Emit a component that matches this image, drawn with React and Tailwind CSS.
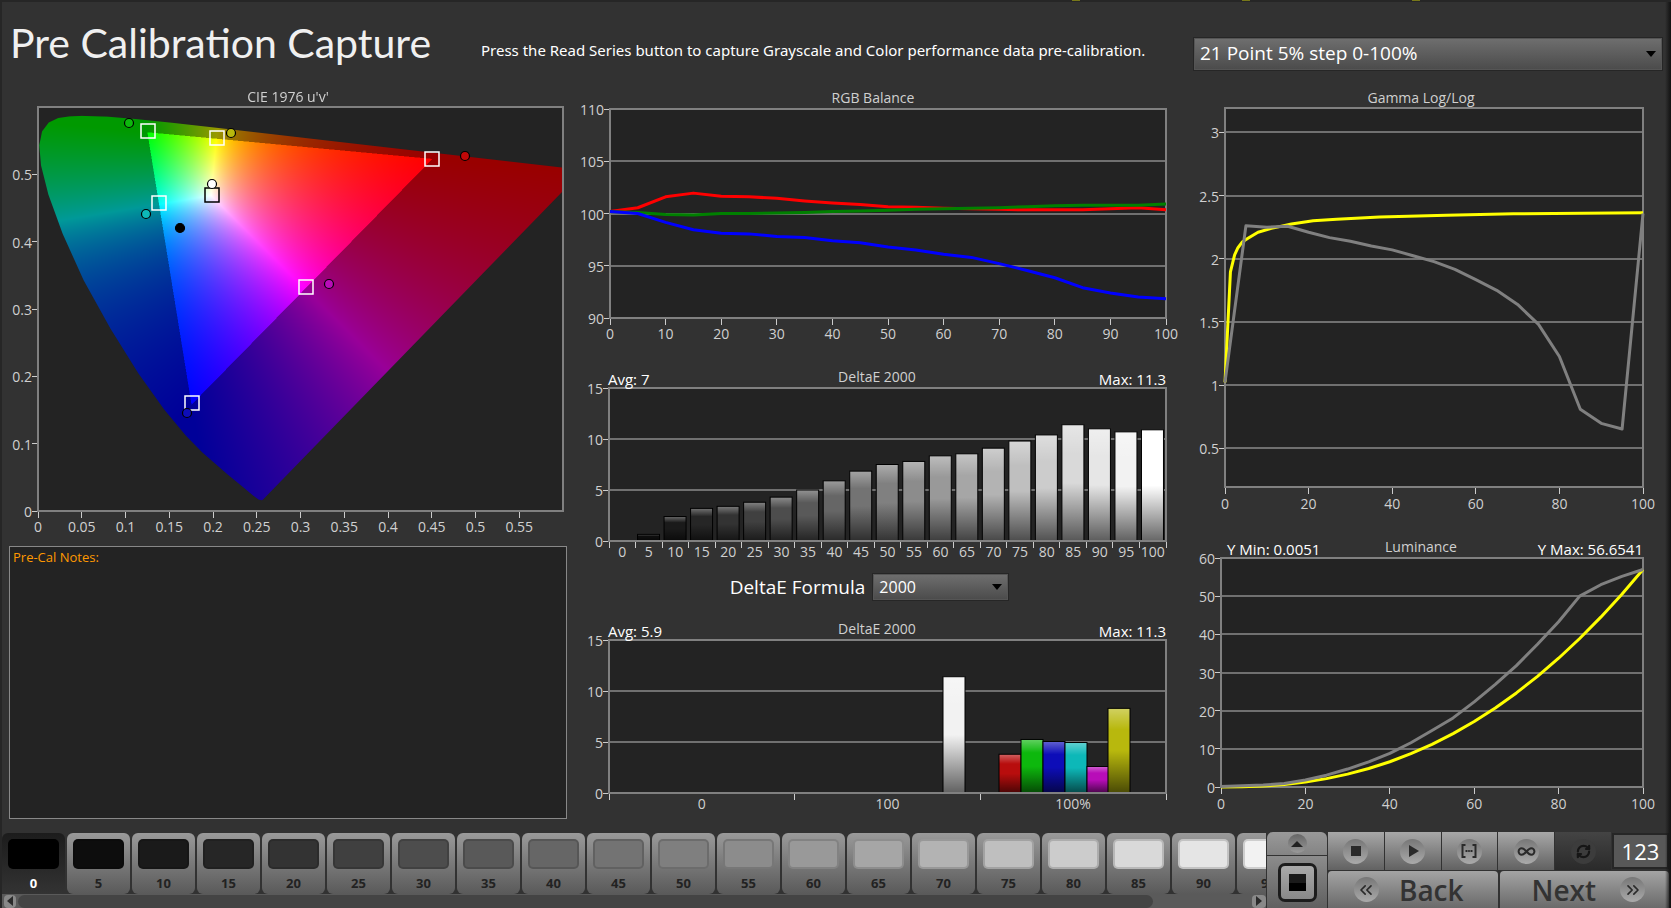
import { useEffect, useRef } from 'react';
import { ChevronsLeft, ChevronsRight, Infinity as InfinityIcon, RefreshCw } from 'lucide-react';

const LEVELS = Array.from({ length: 21 }, (_, i) => i * 5);

const RED = [100.2, 100.55, 101.6, 101.95, 101.65, 101.6, 101.45, 101.2, 101, 100.85, 100.65, 100.6, 100.5, 100.45, 100.4, 100.35, 100.35, 100.35, 100.45, 100.55, 100.35];
const GREEN = [100.2, 100.1, 99.9, 99.85, 100, 100, 100.05, 100.1, 100.2, 100.25, 100.3, 100.4, 100.45, 100.5, 100.55, 100.65, 100.75, 100.8, 100.8, 100.8, 100.9];
const BLUE = [100.2, 100, 99.15, 98.45, 98.1, 98.05, 97.8, 97.7, 97.4, 97.2, 96.8, 96.5, 96.1, 95.8, 95.2, 94.55, 93.85, 92.9, 92.4, 92, 91.85];

const GRAY_DE = [0, 0.65, 2.4, 3.2, 3.4, 3.8, 4.3, 5, 5.9, 6.85, 7.5, 7.8, 8.35, 8.55, 9.1, 9.8, 10.4, 11.4, 11, 10.7, 10.9];

const GAMMA = [1.022, 2.26, 2.25, 2.257, 2.21, 2.167, 2.138, 2.1, 2.07, 2.024, 1.977, 1.916, 1.834, 1.75, 1.638, 1.48, 1.226, 0.808, 0.697, 0.652, 2.358];
const GAMMA_TARGET = [[0, 1.022], [1.3, 1.895], [2.3, 2.03], [3.1, 2.087], [4.2, 2.135], [5.5, 2.162], [7.9, 2.21], [11.1, 2.24], [15.9, 2.275], [21.1, 2.3], [26.7, 2.312], [37, 2.33], [53, 2.344], [69, 2.355], [100, 2.363]];

const LUM = [0.1, 0.3, 0.5, 0.9, 1.85, 3.1, 4.7, 6.6, 8.8, 11.6, 14.8, 18.1, 22.3, 26.9, 31.8, 37.4, 43.3, 50, 53, 55.2, 57];
const LUM_TARGET = LEVELS.map((p) => [p, 57 * (p / 100) ** 2.35]);

const COLOR_BARS = [
  { x: 373, top: 11.4, color: '#f2f2f2' },
  { x: 429, top: 3.8, color: '#b80d0d' },
  { x: 451, top: 5.25, color: '#0db80d' },
  { x: 473, top: 5.05, color: '#0d0db8' },
  { x: 495, top: 4.95, color: '#0db8b8' },
  { x: 517, top: 2.6, color: '#b80db8' },
  { x: 538, top: 8.3, color: '#b8b80d' },
];

// CIE 1931 xy of the spectral locus, 380nm to 700nm
const LOCUS = [
  [0.1741, 0.005], [0.1733, 0.0048], [0.1714, 0.0051], [0.1689, 0.0069], [0.1644, 0.0109], [0.1566, 0.0177], [0.144, 0.0297],
  [0.1355, 0.0399], [0.1241, 0.0578], [0.1096, 0.0868], [0.0913, 0.1327], [0.0687, 0.2007], [0.0454, 0.295], [0.0235, 0.4127],
  [0.0082, 0.5384], [0.0039, 0.6548], [0.0139, 0.7502], [0.0389, 0.812], [0.0743, 0.8338], [0.1142, 0.8262], [0.1547, 0.8059],
  [0.2296, 0.7543], [0.3016, 0.6923], [0.3731, 0.6245], [0.4441, 0.5547], [0.5125, 0.4866], [0.5752, 0.4242], [0.627, 0.3725],
  [0.6915, 0.3083], [0.7347, 0.2653],
].map(([x, y]) => {
  const d = -2 * x + 12 * y + 3;
  return [(4 * x) / d, (9 * y) / d];
});

const CIE = { w: 525, h: 404, max: 0.6, scale: 2 };

const TARGETS = [
  { x: 109, y: 24 }, { x: 178, y: 31 }, { x: 393, y: 52 }, { x: 120, y: 96 },
  { x: 173, y: 88, stroke: '#000' }, { x: 267, y: 180 }, { x: 153, y: 296 },
];
const MEASURED = [
  { x: 90, y: 16, fill: '#0db80d' }, { x: 192, y: 26, fill: '#b8b80d' }, { x: 426, y: 49, fill: '#c00808' },
  { x: 173, y: 77, fill: '#fff' }, { x: 107, y: 107, fill: '#0db8b8' }, { x: 141, y: 121, fill: '#000' },
  { x: 290, y: 177, fill: '#b80db8' }, { x: 148, y: 306, fill: '#0d0db8' },
];

function drawGamut(canvas) {
  const ctx = canvas.getContext('2d');
  const { max } = CIE;
  const w = CIE.w * CIE.scale;
  const h = CIE.h * CIE.scale;
  const img = ctx.createImageData(w, h);
  for (let py = 0; py < h; py++) {
    for (let px = 0; px < w; px++) {
      const u = ((px + 0.5) / w) * max;
      const v = (1 - (py + 0.5) / h) * max;
      const d = 6 * u - 16 * v + 12;
      const x = (9 * u) / d;
      const y = (4 * v) / d;
      const z = 1 - x - y;
      const lin = [
        3.2406 * x - 1.5372 * y - 0.4986 * z,
        -0.9689 * x + 1.8758 * y + 0.0415 * z,
        0.0557 * x - 0.204 * y + 1.057 * z,
      ];
      const dim = Math.min(...lin) < 0 ? 0.6 : 1;
      const top = Math.max(...lin);
      const i = (py * w + px) * 4;
      lin.forEach((c, k) => {
        img.data[i + k] = 255 * dim * Math.max(0, c / top);
      });
      img.data[i + 3] = 255;
    }
  }
  ctx.putImageData(img, 0, 0);

  // keep only what lies inside the locus
  ctx.globalCompositeOperation = 'destination-in';
  ctx.beginPath();
  LOCUS.forEach(([u, v]) => ctx.lineTo((u / max) * w, (1 - v / max) * h));
  ctx.closePath();
  ctx.fill();
}

function Label({ x, y, anchor = 'middle', className = 'fill-[#d0d0d0] text-[14px]', children }) {
  return (
    <text x={x} y={y} textAnchor={anchor} className={className}>
      {children}
    </text>
  );
}

function Chart({ w, h, plot, xMax, yRange, xTicks = [], yTicks, xLabels, xLabelY, title, titleX, titleY, left, right, grid = true, series = [], children }) {
  const [l, t, r, b] = plot;
  const [y0, y1] = yRange;
  const sx = (v) => l + (v / xMax) * (r - l);
  const sy = (v) => b - ((v - y0) / (y1 - y0)) * (b - t);

  return (
    <svg viewBox={`0 0 ${w} ${h}`} className="block h-auto w-full">
      <rect x={l} y={t} width={r - l} height={b - t} fill="#232323" />
      {grid && yTicks.map((v) => (
        <line key={v} x1={l} x2={r} y1={sy(v)} y2={sy(v)} stroke="#707070" strokeWidth="2" shapeRendering="crispEdges" />
      ))}
      {yTicks.map((v) => (
        <g key={v}>
          <line x1={l - 6} x2={l} y1={sy(v)} y2={sy(v)} stroke="#ccc" strokeWidth="1" shapeRendering="crispEdges" />
          <Label x={l - 6} y={Math.round(sy(v)) + 6} anchor="end">{v}</Label>
        </g>
      ))}
      {xTicks.map((v) => (
        <line key={v} x1={sx(v)} x2={sx(v)} y1={b} y2={b + 7} stroke="#ccc" strokeWidth="1" shapeRendering="crispEdges" />
      ))}
      {xLabels.map(([v, text]) => (
        <Label key={v} x={sx(v)} y={xLabelY}>{text}</Label>
      ))}
      {children && children(sx, sy)}
      <rect x={l} y={t} width={r - l} height={b - t} fill="none" stroke="#808080" strokeWidth="2" shapeRendering="crispEdges" />
      {series.map((s) => (
        <polyline
          key={s.color}
          points={s.data.map(([x, y]) => `${sx(x)},${sy(y)}`).join(' ')}
          fill="none"
          stroke={s.color}
          strokeWidth="3"
          strokeLinejoin="round"
        />
      ))}
      <Label x={titleX} y={titleY}>{title}</Label>
      {left && <Label x={left.x} y={left.y} anchor="start" className="fill-white text-[15px]">{left.text}</Label>}
      {right && <Label x={r} y={right.y} anchor="end" className="fill-white text-[15px]">{right.text}</Label>}
    </svg>
  );
}

function Bar({ x, y, height, color }) {
  if (height <= 0) return null;
  return (
    <g>
      <rect x={x} y={y} width="22" height={height} fill={color} />
      <rect x={x} y={y} width="22" height={height} fill="url(#barShade)" stroke="#000" strokeWidth="1" />
    </g>
  );
}

function CieChart() {
  const ref = useRef(null);
  useEffect(() => drawGamut(ref.current), []);

  return (
    <Chart
      w={570} h={455} plot={[38, 27, 563, 431]} xMax={0.6} yRange={[0, 0.6]} grid={false}
      xTicks={[0, 0.05, 0.1, 0.15, 0.2, 0.25, 0.3, 0.35, 0.4, 0.45, 0.5, 0.55]}
      yTicks={[0, 0.1, 0.2, 0.3, 0.4, 0.5]}
      xLabels={[0, 0.05, 0.1, 0.15, 0.2, 0.25, 0.3, 0.35, 0.4, 0.45, 0.5, 0.55].map((v) => [v, v])}
      xLabelY={452} title="CIE 1976 u'v'" titleX={288} titleY={22}
    >
      {() => (
        <>
          <foreignObject x="38" y="27" width={CIE.w} height={CIE.h}>
            <canvas ref={ref} width={CIE.w * CIE.scale} height={CIE.h * CIE.scale} className="block h-full w-full" />
          </foreignObject>
          <g transform="translate(39 27)" fill="none">
            {TARGETS.map((m) => (
              <rect key={`${m.x}-${m.y}`} x={m.x - 7} y={m.y - 7} width="14" height="14" stroke={m.stroke || '#fff'} strokeWidth="1.5" />
            ))}
            {MEASURED.map((m) => (
              <circle key={`${m.x}-${m.y}`} cx={m.x} cy={m.y} r="4.5" fill={m.fill} stroke="#000" strokeWidth="1.2" />
            ))}
          </g>
        </>
      )}
    </Chart>
  );
}

const zip = (ys) => ys.map((y, i) => [LEVELS[i], y]);
const same = (vs) => vs.map((v) => [v, v]);

function Tile({ level }) {
  const g = Math.round(level * 2.55);
  const active = level === 0;
  return (
    <button
      className={
        'flex h-[61px] w-[63px] shrink-0 flex-col items-center rounded-md pt-[6px] text-[13px] font-bold leading-4 ' +
        (active ? 'bg-linear-to-b from-[#1c1c1c] to-[#333] text-white' : 'bg-linear-to-b from-[#9a9a9a] to-[#5a5a5a] text-[#222]')
      }
    >
      <span
        className="mb-[6px] h-[30px] w-[51px] shrink-0 rounded-[5px] border-2 border-black/15"
        style={{ background: `rgb(${g},${g},${g})` }}
      />
      {level}
    </button>
  );
}

function Knob({ children, className = 'bg-linear-to-b from-[#777] to-[#aaa]' }) {
  return <span className={'flex size-[25px] items-center justify-center rounded-full text-[#2a2a2a] ' + className}>{children}</span>;
}

const ctl = 'flex h-[38px] flex-1 items-center justify-center bg-linear-to-b from-[#a8a8a8] to-[#626262]';
const nav = 'flex h-[37px] flex-1 items-center justify-center rounded-t-sm bg-linear-to-b from-[#a4a4a4] to-[#6a6a6a] text-[28px] font-semibold leading-none text-[#333] ';

function Footer() {
  return (
    <footer className="flex h-[76px] items-start gap-px">
      <div className="flex min-w-0 flex-1 flex-col">
        <div className="flex h-[62px] gap-[2px] overflow-hidden pt-px">
          {LEVELS.map((v) => <Tile key={v} level={v} />)}
        </div>
        <div className="flex h-[14px] items-center bg-[#5a5a5a]">
          <button aria-label="Scroll left" className="ml-[2px] flex h-[13px] w-[12px] items-center justify-center rounded-sm bg-[#888]">
            <svg viewBox="0 0 8 10" className="h-[10px] w-[8px]"><path d="M7 0v10L1 5z" fill="#2a2a2a" /></svg>
          </button>
          <div className="flex-1 pl-[2px]">
            <div className="h-[13px] w-[92%] rounded-full bg-[#444]" />
          </div>
          <button aria-label="Scroll right" className="flex h-[13px] w-[14px] items-center justify-center rounded-sm bg-[#888]">
            <svg viewBox="0 0 8 10" className="h-[10px] w-[8px]"><path d="M1 0v10l6-5z" fill="#2a2a2a" /></svg>
          </button>
        </div>
      </div>

      <div className="flex h-[76px] w-[60px] flex-col gap-px">
        <button aria-label="Expand" className="flex h-[23px] items-center justify-center rounded-t-md bg-linear-to-b from-[#999] to-[#848484]">
          <span className="flex size-[19px] items-center justify-center rounded-full bg-linear-to-b from-[#666] to-[#999]">
            <svg viewBox="0 0 12 7" className="h-[7px] w-[12px]"><path d="M0 7l6-6 6 6z" fill="#222" /></svg>
          </span>
        </button>
        <button aria-label="Pattern window" className="flex h-[52px] items-center justify-center bg-linear-to-b from-[#8c8c8c] to-[#606060]">
          <span className="flex size-[39px] items-center justify-center rounded-[7px] border-[3px] border-[#1c1c1c] bg-linear-to-b from-[#aaa] to-[#888]">
            <span className="size-[17px] bg-linear-to-b from-[#1a1a1a] from-50% to-black to-50%" />
          </span>
        </button>
      </div>

      <div className="flex w-[343px] flex-col gap-px pr-[2px]">
        <div className="flex gap-px">
          <button aria-label="Stop" className={ctl}>
            <Knob><svg viewBox="0 0 10 10" className="size-[10px]"><path d="M0 0h10v10H0z" fill="#2a2a2a" /></svg></Knob>
          </button>
          <button aria-label="Play" className={ctl}>
            <Knob><svg viewBox="0 0 12 12" className="size-[12px]"><path d="M2 0l10 6-10 6z" fill="#2a2a2a" /></svg></Knob>
          </button>
          <button aria-label="Read series" className={ctl}>
            <Knob>
              <svg viewBox="0 0 16 14" className="h-[14px] w-[16px]" fill="none" stroke="#2a2a2a" strokeWidth="2">
                <path d="M4.500 1H1.500v12h3M11.500 1h3v12h-3" />
                <path d="M4.500 7h2M7.200 7h1.600M9.500 7h2" />
              </svg>
            </Knob>
          </button>
          <button aria-label="Read continuously" className={ctl}>
            <Knob><InfinityIcon className="size-[19px]" strokeWidth={2.5} /></Knob>
          </button>
          <button aria-label="Refresh" className="flex h-[38px] flex-1 items-center justify-center bg-linear-to-b from-[#444] to-[#2a2a2a]">
            <Knob className="bg-[#3c3c3c]"><RefreshCw className="size-[15px] text-[#161616]" strokeWidth={3.5} /></Knob>
          </button>
          <output className="flex h-[36px] w-[57px] items-center justify-center self-center border-2 border-[#262626] bg-[#585858] text-[22px] text-white">123</output>
        </div>
        <div className="flex gap-[2px]">
          <button className={nav + 'gap-[20px] pr-[8px]'}>
            <Knob><ChevronsLeft className="size-[20px]" /></Knob>
            Back
          </button>
          <button className={nav + 'gap-[24px] pl-[8px]'}>
            Next
            <Knob><ChevronsRight className="size-[20px]" /></Knob>
          </button>
        </div>
      </div>
    </footer>
  );
}

function Select({ id, className, children, ...rest }) {
  return (
    <div className={'relative ' + className}>
      <select id={id} {...rest} className="h-full w-full appearance-none border border-[#555] bg-linear-to-b from-[#6e6e6e] to-[#4c4c4c] pl-[5px] text-white outline-1 outline-[#262626]">
        {children}
      </select>
      <svg viewBox="0 0 10 6" className="pointer-events-none absolute top-1/2 right-[6px] h-[6px] w-[10px] -translate-y-1/2">
        <path d="M0 0h10L5 6z" fill="#000" />
      </svg>
    </div>
  );
}

export default function App() {
  return (
    <div className="relative flex min-h-screen flex-col border-t-2 border-l-2 border-[#262626] bg-[#323232] font-['Open_Sans',sans-serif] text-white">
      <svg className="absolute size-0" aria-hidden="true">
        <linearGradient id="barShade" x1="0" y1="0" x2="0" y2="1">
          <stop offset="0" stopColor="#fff" stopOpacity="0.35" />
          <stop offset="0.25" stopColor="#fff" stopOpacity="0" />
          <stop offset="0.5" stopColor="#000" stopOpacity="0" />
          <stop offset="1" stopColor="#000" stopOpacity="0.6" />
        </linearGradient>
      </svg>
      <div className="pointer-events-none absolute inset-y-0 right-0 w-[6px] bg-linear-to-r from-transparent to-[#111]" />
      {/* lower edges of the tab markers above the page */}
      <div className="pointer-events-none absolute -top-[2px] right-[251px] flex gap-[162px]">
        <span className="h-px w-[8px] bg-[#77771a]" />
        <span className="h-px w-[8px] bg-[#77771a]" />
        <span className="h-px w-[8px] bg-[#77771a]" />
      </div>

      <header className="flex h-[78px] items-center pl-[8px] pr-[9px]">
        <h1 className="w-[471px] pt-[4px] font-['Lato'] text-[41px] text-[#f0f0f0]">Pre Calibration Capture</h1>
        <p className="flex-1 pt-[18px] font-['Noto_Sans'] text-[15px]">Press the Read Series button to capture Grayscale and Color performance data pre-calibration.</p>
        <Select id="series" aria-label="Series" className="mt-[25px] h-[32px] w-[468px] text-[19px]">
          <option>21 Point 5% step 0-100%</option>
        </Select>
      </header>

      <main className="-ml-[2px] grid grid-cols-[570fr_610fr_491fr]">
        <section className="flex flex-col">
          <CieChart />
          <textarea
            aria-label="Pre-calibration notes"
            defaultValue="Pre-Cal Notes:"
            className="mt-[11px] mr-[3px] mb-[11px] ml-[9px] flex-1 resize-none border border-[#888] bg-[#232323] px-[3px] pt-px text-[13px] text-[#f90]"
          />
        </section>

        <section>
          <Chart
            w={610} h={280} plot={[40, 29, 596, 238]} xMax={100} yRange={[90, 110]}
            xTicks={LEVELS.filter((v) => v % 10 === 0)} yTicks={[90, 95, 100, 105, 110]}
            xLabels={same(LEVELS.filter((v) => v % 10 === 0))} xLabelY={259}
            title="RGB Balance" titleX={303} titleY={23}
            series={[
              { color: '#f00', data: zip(RED) },
              { color: '#008000', data: zip(GREEN) },
              { color: '#00f', data: zip(BLUE) },
            ]}
          />
          <Chart
            w={610} h={212} plot={[39, 28, 596, 181]} xMax={21} yRange={[0, 15]}
            xTicks={Array.from({ length: 22 }, (_, i) => i)} yTicks={[0, 5, 10, 15]}
            xLabels={LEVELS.map((v, i) => [i + 0.5, v])} xLabelY={197}
            title="DeltaE 2000" titleX={307} titleY={22}
            left={{ x: 38, y: 25, text: 'Avg: 7' }} right={{ y: 25, text: 'Max: 11.3' }}
          >
            {(sx, sy) => GRAY_DE.map((v, i) => {
              const g = Math.round(i * 12.75);
              return <Bar key={i} x={sx(i) + 2} y={sy(v)} height={181 - sy(v)} color={`rgb(${g},${g},${g})`} />;
            })}
          </Chart>
          <div className="flex h-[30px] items-center justify-center gap-[8px] pr-[12px]">
            <label htmlFor="formula" className="text-[19px]">DeltaE Formula</label>
            <Select id="formula" className="h-[26px] w-[135px] text-[16px]">
              <option>2000</option>
              <option>CMC</option>
              <option>1994</option>
            </Select>
          </div>
          <Chart
            w={610} h={228} plot={[39, 38, 596, 191]} xMax={3} yRange={[0, 15]}
            xTicks={[0, 1, 2, 3]} yTicks={[0, 5, 10, 15]}
            xLabels={[[0.5, '0'], [1.5, '100'], [2.5, '100%']]} xLabelY={207}
            title="DeltaE 2000" titleX={307} titleY={32}
            left={{ x: 38, y: 35, text: 'Avg: 5.9' }} right={{ y: 35, text: 'Max: 11.3' }}
          >
            {(sx, sy) => COLOR_BARS.map((c) => (
              <Bar key={c.x} x={c.x} y={sy(c.top)} height={191 - sy(c.top)} color={c.color} />
            ))}
          </Chart>
        </section>

        <section>
          <Chart
            w={491} h={450} plot={[45, 28, 463, 407]} xMax={100} yRange={[0.193, 3.193]}
            xTicks={[0, 20, 40, 60, 80, 100]} yTicks={[0.5, 1, 1.5, 2, 2.5, 3]}
            xLabels={same([0, 20, 40, 60, 80, 100])} xLabelY={429}
            title="Gamma Log/Log" titleX={241} titleY={23}
            series={[{ color: '#ff0', data: GAMMA_TARGET }, { color: '#808080', data: zip(GAMMA) }]}
          />
          <Chart
            w={491} h={300} plot={[41, 28, 463, 257]} xMax={100} yRange={[0, 60]}
            xTicks={[0, 20, 40, 60, 80, 100]} yTicks={[0, 10, 20, 30, 40, 50, 60]}
            xLabels={same([0, 20, 40, 60, 80, 100])} xLabelY={279}
            title="Luminance" titleX={241} titleY={22}
            left={{ x: 47, y: 25, text: 'Y Min: 0.0051' }} right={{ y: 25, text: 'Y Max: 56.6541' }}
            series={[{ color: '#ff0', data: LUM_TARGET }, { color: '#808080', data: zip(LUM) }]}
          />
        </section>
      </main>

      <div className="mt-auto">
        <Footer />
      </div>
    </div>
  );
}
